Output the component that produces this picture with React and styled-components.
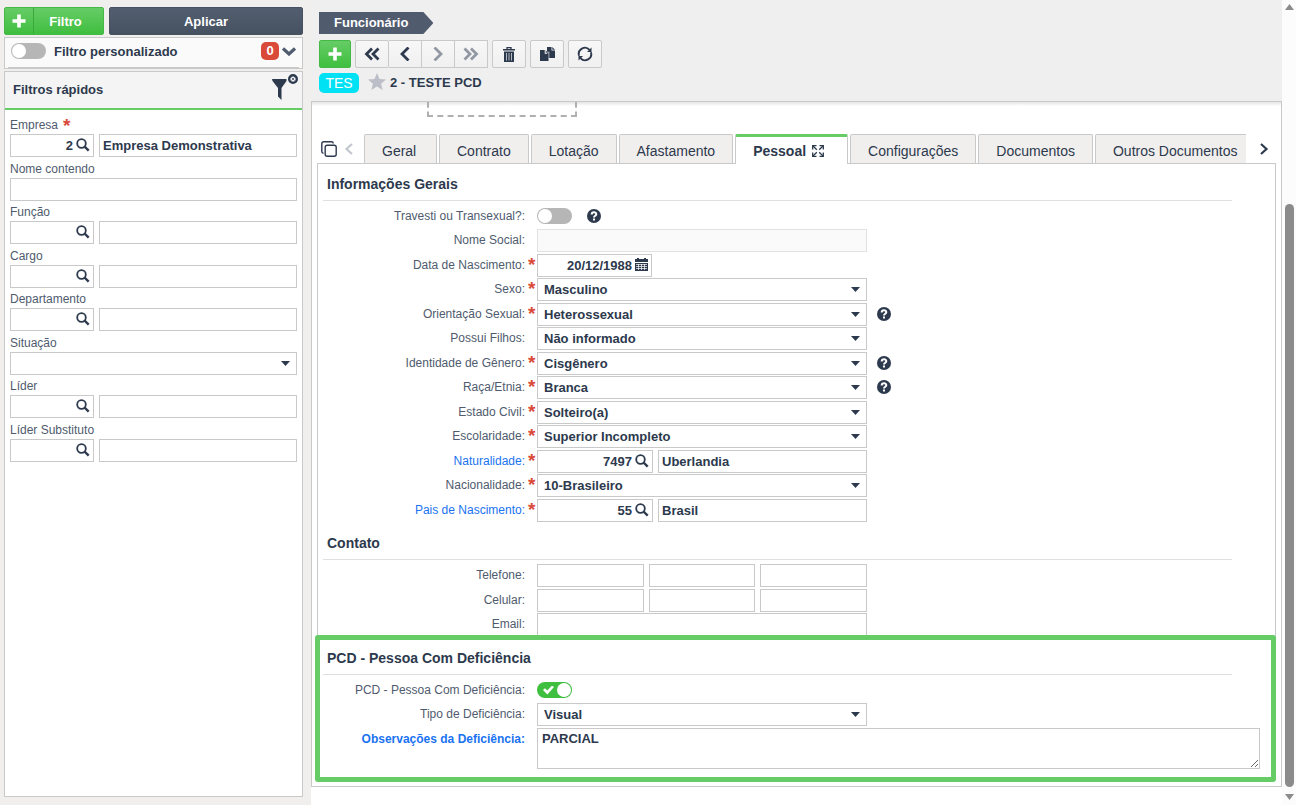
import React, { useId, useState } from 'react';
import styled, { createGlobalStyle, css } from 'styled-components';

const GlobalStyle = createGlobalStyle`
  * { box-sizing: border-box; }

  body {
    margin: 0;
    background: #fff;
    color: #2d394d;
    font-family: "Liberation Sans", Arial, sans-serif;
    font-size: 13px;
  }

  button, input, select, textarea {
    margin: 0;
    color: inherit;
    font: inherit;
  }

  button { cursor: pointer; }
`;

/* ---------- Page ---------- */

const Page = styled.div`
  display: flex;
  min-height: 100vh;
`;

const Sidebar = styled.aside`
  display: flex;
  flex: 0 0 311px;
  flex-direction: column;
  gap: 2px;
  padding: 7px 8px 8px 4px;
  background: #f1efee;
`;

const Main = styled.main`
  display: flex;
  flex: 1;
  flex-direction: column;
  min-width: 0;
`;

const ScrollTrack = styled.div`
  display: flex;
  flex: 0 0 14px;
  flex-direction: column;
  align-items: center;
  padding: 4px 0 5px;
  background: #fcfcfc;
`;

const ScrollSpace = styled.div`
  flex: 1;
`;

const ScrollThumb = styled.div`
  flex: 3;
  width: 9px;
  margin-bottom: 7px;
  border-radius: 5px;
  background: #8b8b8b;
`;

/* ---------- Buttons ---------- */

const green = css`
  border: 1px solid #45b945;
  background: linear-gradient(#66cc66, #3fbf3f);
  color: #fff;
`;

const FilterActions = styled.div`
  display: flex;
  gap: 5px;
`;

const FilterButton = styled.button`
  ${green}
  display: flex;
  flex: 0 0 100px;
  align-items: center;
  height: 28px;
  padding: 0;
  border-radius: 2px;
  font-weight: bold;

  span {
    flex: 1;
    padding-right: 6px;
  }

  svg {
    box-sizing: content-box;
    padding: 6px 7px;
    border-right: 1px solid #3aa83a;
  }
`;

const ApplyButton = styled.button`
  flex: 1;
  height: 28px;
  border: 1px solid #465161;
  border-radius: 2px;
  background: linear-gradient(#535d70, #465260);
  color: #fff;
  font-weight: bold;
`;

const IconButton = styled.button`
  display: flex;
  align-items: center;
  justify-content: center;
  width: 34px;
  height: 28px;
  padding: 0;
  border: 1px solid #c9c9c9;
  border-radius: 2px;
  background: linear-gradient(#f7f7f7, #f0f0f0);

  &:disabled {
    color: #9298a3;
    cursor: default;
  }

  ${({ $primary }) => $primary && css`
    ${green}
    width: 32px;
  `}
`;

const ButtonGroup = styled.div`
  display: flex;

  ${IconButton} + ${IconButton} {
    width: 33px;
    border-left: 0;
    border-radius: 0;
  }
`;

const BareButton = styled.button`
  display: flex;
  align-items: center;
  justify-content: center;
  padding: 0;
  border: 0;
  background: none;

  &:disabled {
    color: #c3c7ce;
  }
`;

/* ---------- Sidebar boxes ---------- */

const CustomFilter = styled.div`
  display: flex;
  align-items: center;
  height: 32px;
  padding: 0 6px 4px;
  border: 1px solid #c9c9c9;
  background: linear-gradient(#c9c9c9, #c9c9c9) 50% 100% / calc(100% - 6px) 1px no-repeat #fafafa;

  label {
    flex: 1;
    margin-left: 8px;
    font-weight: bold;
  }
`;

const Counter = styled.span`
  width: 18px;
  margin-right: 3px;
  border-radius: 5px;
  background: #d94a38;
  color: #fff;
  font-weight: bold;
  line-height: 18px;
  text-align: center;
`;

const QuickFilters = styled.section`
  flex: 1;
  border: 1px solid #c9c9c9;
  background: #fff;
`;

const QuickHeader = styled.header`
  display: flex;
  align-items: flex-start;
  justify-content: space-between;
  height: 38px;
  padding: 0 3px 0 8px;
  border-bottom: 2px solid #66cc66;
  background: #f4f4f4;

  h2 {
    margin: 0;
    font-size: 13px;
    line-height: 35px;
  }
`;

const QuickFields = styled.div`
  display: grid;
  grid-auto-rows: 44px 43px;
  padding: 6px 5px;
`;

/* ---------- Controls ---------- */

const TextInput = styled.input`
  width: 100%;
  min-width: 0;
  height: 23px;
  padding: 0 3px;
  border: 1px solid #c9c9c9;
  background: #fff;
  font-weight: bold;
  outline: none;

  &:disabled {
    border-color: #e2e2e2;
    background: #fafafa;
  }
`;

const IconInput = styled.div`
  display: flex;
  flex: 0 0 ${({ $width }) => $width}px;
  align-items: center;
  width: ${({ $width }) => $width}px;
  height: 23px;
  padding-right: 3px;
  border: 1px solid #c9c9c9;
  background: #fff;

  ${TextInput} {
    height: 21px;
    border: 0;
    text-align: right;
  }

  ${BareButton} {
    padding-bottom: 2px;
  }
`;

const SelectBox = styled.div`
  display: grid;
  align-content: start;
  align-items: center;

  select, svg {
    grid-area: 1 / 1;
  }

  select {
    width: 100%;
    height: 23px;
    padding: 0 24px 0 6px;
    border: 1px solid #c9c9c9;
    border-radius: 0;
    background: #fff;
    appearance: none;
    font-weight: bold;
    outline: none;
  }

  svg {
    justify-self: end;
    margin-right: 7px;
    pointer-events: none;
  }
`;

const TextArea = styled.textarea`
  display: block;
  width: 100%;
  height: 41px;
  padding: 2px 4px;
  border: 1px solid #c9c9c9;
  font-weight: bold;
  outline: none;
`;

const Switch = styled.input.attrs({ type: 'checkbox', role: 'switch' })`
  display: flex;
  flex: none;
  align-items: center;
  width: 35px;
  height: 16px;
  padding: 1px;
  border-radius: 8px;
  background: #b6b6b6;
  appearance: none;
  cursor: pointer;

  &::after {
    width: 14px;
    height: 14px;
    border-radius: 50%;
    background: #fff;
    content: '';
  }

  &:checked {
    justify-content: space-between;
    padding-left: 6px;
    background: #3fbf3f;
  }

  &:checked::before {
    width: 11px;
    height: 9px;
    background: #fff;
    clip-path: polygon(0 50%, 18% 30%, 38% 55%, 82% 0, 100% 18%, 40% 100%);
    content: '';
  }
`;

const Required = styled.span`
  color: #d94a38;
  font-size: 19px;
  font-weight: bold;
  line-height: 22px;
`;

const QuickField = styled.div`
  label {
    display: flex;
    gap: 5px;
    height: 18px;
    color: #4f5b6e;
    font-size: 12px;
    line-height: 18px;
  }

  ${Required} {
    line-height: 20px;
  }
`;

const Split = styled.div`
  display: flex;
  gap: 5px;
`;

/* ---------- Main header ---------- */

const MainHeader = styled.header`
  display: flex;
  flex-direction: column;
  align-items: flex-start;
  padding: 12px 8px 8px;
  background: #efefef;
`;

const Crumb = styled.h1`
  margin: 0 0 6px;
  padding: 0 25px 0 15px;
  background: #505b6e;
  clip-path: polygon(0 0, calc(100% - 10px) 0, 100% 50%, calc(100% - 10px) 100%, 0 100%);
  color: #fff;
  font-size: 13px;
  line-height: 22px;
`;

const Toolbar = styled.div`
  display: flex;
  gap: 4px;
`;

const RecordTitle = styled.div`
  display: flex;
  height: 20px;
  margin-top: 5px;
  font-weight: bold;
  line-height: 19px;

  svg {
    margin-right: 4px;
  }
`;

const Tag = styled.span`
  min-width: 40px;
  margin-right: 9px;
  border-radius: 5px;
  background: #00e1f4;
  color: #fff;
  font-size: 14px;
  font-weight: normal;
  line-height: 20px;
  text-align: center;
`;

/* ---------- Record card and tabs ---------- */

const Card = styled.section`
  padding: 0 5px 4px;
  border: 1px solid #c9c9c9;
  background: linear-gradient(#e4e4e4, #fff) 0 0 / 100% 4px no-repeat #fff;
`;

const PhotoSlot = styled.div`
  width: 150px;
  height: 15px;
  margin-left: 110px;
  border: 2px dashed #b0b0b0;
  border-top: 0;
`;

const TabStrip = styled.div`
  display: flex;
  gap: 7px;
  align-items: center;
  height: 29px;
  margin-top: 17px;
  padding: 0 7px 0 4px;
`;

const TabList = styled.div`
  display: flex;
  flex: 1;
  gap: 2px;
  min-width: 0;
  height: 30px;
  margin: 1px 6px 0 3px;
  overflow: hidden;
  z-index: 1;
`;

const Tab = styled.button`
  display: flex;
  flex: none;
  gap: 6px;
  align-items: center;
  min-width: 73px;
  height: 29px;
  padding: 4px 17px 0;
  border: 1px solid #c9c9c9;
  border-bottom: 0;
  border-radius: 2px 2px 0 0;
  background: #f1efee;
  font-size: 14px;

  &[aria-selected='true'] {
    height: 30px;
    padding: 0 23px 0 17px;
    border-top: 3px solid #66cc66;
    background: #fff;
    font-weight: bold;
  }
`;

const Panel = styled.div`
  padding-left: 5px;
  border: 1px solid #c9c9c9;
  border-bottom: 0;
`;

/* Lies over the end of the panel */
const Highlight = styled.div`
  position: relative;
  margin: -3px 0 0 -2px;
  padding: 0 0 8px 3px;
  border: 5px solid #66cc66;
  border-radius: 3px;
  background: #fff;
`;

const SectionTitle = styled.h2`
  height: ${({ $compact }) => ($compact ? 35 : 37)}px;
  margin: 0 ${({ $compact }) => ($compact ? 39 : 43)}px 4px 0;
  padding: ${({ $compact }) => ($compact ? 2 : 4)}px 0 0 4px;
  border-bottom: 1px solid #e0e0e0;
  font-size: 14px;
  line-height: 32px;
`;

const FormGrid = styled.div`
  display: grid;
  grid-auto-rows: ${({ $rows }) => $rows};
`;

const Row = styled.div`
  display: grid;
  grid-template-columns: 202px 12px minmax(0, ${({ $wide }) => ($wide ? '1fr' : '330px')}) auto;
  align-items: start;
  justify-content: ${({ $wide }) => ($wide ? 'stretch' : 'start')};
  padding-right: ${({ $wide }) => ($wide ? 11 : 0)}px;

  ${Required} {
    padding-left: 3px;
  }
`;

const RowLabel = styled.label`
  color: ${({ $link }) => ($link ? '#1a73f0' : '#4f5b6e')};
  font-size: 12px;
  font-weight: ${({ $bold }) => ($bold ? 'bold' : 'normal')};
  line-height: 23px;
  text-align: right;
`;

const SwitchLine = styled.div`
  display: flex;
  gap: 15px;
  align-items: center;
  height: 22px;
`;

const HelpButton = styled(BareButton)`
  width: 14px;
  height: 14px;
  margin: ${({ $inline }) => ($inline ? '0' : '4px 0 0 10px')};
`;

const Phones = styled.div`
  display: grid;
  grid-template-columns: repeat(3, 1fr);
  gap: 5px;
`;

/* ---------- Icons ---------- */

const Svg = styled.svg`
  flex: none;
`;

const Icon = ({ size = 16, width, height, children, ...rest }) => (
  <Svg
    width={width || size}
    height={height || size}
    viewBox={`0 0 ${width || size} ${height || size}`}
    fill="none"
    stroke="currentColor"
    aria-hidden="true"
    {...rest}
  >
    {children}
  </Svg>
);

const PlusIcon = () => (
  <Icon size={14} strokeWidth="3.600"><path d="M7 0.500v13M0.500 7h13" /></Icon>
);

const SearchIcon = () => (
  <Icon size={14}>
    <circle cx="5.500" cy="5.500" r="4.300" strokeWidth="1.800" />
    <path d="M8.500 8.500l4.200 4.200" strokeWidth="2.400" />
  </Icon>
);

const CaretIcon = () => (
  <Icon width={9} height={5} stroke="none" fill="currentColor"><path d="M0 0h9L4.500 5z" /></Icon>
);

const CalendarIcon = () => (
  <Icon size={13} stroke="none" fill="currentColor">
    <path d="M0 1h2V0h2v1h5V0h2v1h2v3H0zM0 5h13v8H0z" />
    <path d="M1 6.500h11M1 8.500h11M1 10.500h11M3.500 6v6M6.500 6v6M9.500 6v6" stroke="#fff" strokeWidth="0.700" />
  </Icon>
);

const ChevronIcon = ({ double, right }) => (
  <Icon width={16} height={14} strokeWidth="2.800" transform={right ? 'scale(-1 1)' : undefined}>
    {double
      ? <path d="M8 1.500L2.500 7L8 12.500M14.500 1.500L9 7L14.500 12.500" />
      : <path d="M11.500 0.500L5 7l6.500 6.500" />}
  </Icon>
);

const ChevronDownIcon = () => (
  <Icon width={14} height={9} stroke="#4f5b6e" strokeWidth="3.200"><path d="M1 1.500l6 5.500l6-5.500" /></Icon>
);

const TrashIcon = () => (
  <Icon width={12} height={15}>
    <path d="M4 2V0.700h4V2" strokeWidth="1.300" />
    <path d="M0 2h12v1.500H0zM1 4.500h10V15H1z" fill="currentColor" stroke="none" />
    <path d="M3.500 6v7.500M6 6v7.500M8.500 6v7.500" stroke="#b5bac2" strokeWidth="1" />
  </Icon>
);

const CopyIcon = () => (
  <Icon width={15} height={14} stroke="none" fill="currentColor">
    <path d="M7 0h4.500v3.500H15V11H7z" />
    <path d="M12.300 0L15 2.700h-2.700z" />
    <path d="M0 3h4.700v3.700H8.500V14H0z" />
    <path d="M5.500 3l3 2.900h-3z" stroke="#f4f4f4" strokeWidth="0.500" />
    <path d="M8.900 4.500V11.200" stroke="#f4f4f4" strokeWidth="0.600" />
  </Icon>
);

const RefreshIcon = () => (
  <Icon size={16} strokeWidth="1.900">
    <path d="M2.100 9.800A6.100 6.100 0 0 1 12.500 3.900M13.900 6.200A6.100 6.100 0 0 1 3.500 12.100" />
    <path d="M14.500 1.500v4.500h-4.500zM1.500 14.500v-4.500h4.500z" fill="currentColor" stroke="none" />
  </Icon>
);

const StarIcon = () => (
  <Icon width={18} height={17} stroke="none" fill="#bcbfc7">
    <path d="M9 0l2.500 5.900l6.500.6l-4.900 4.200L14.600 17L9 13.600L3.400 17l1.500-6.300L0 6.500l6.500-.6z" />
  </Icon>
);

const FunnelIcon = () => (
  <Icon width={27} height={28}>
    <path d="M0 7h14.500v2L9.500 16v12L6 24.500V16L0.500 9z" fill="currentColor" stroke="none" />
    <circle cx="21" cy="7" r="3.800" strokeWidth="2.400" fill="#f4f4f4" />
    <path d="M19.500 5.500l3 3M22.500 5.500l-3 3" strokeWidth="0.700" />
  </Icon>
);

const HelpIcon = () => (
  <Icon size={14}>
    <circle cx="7" cy="7" r="7" fill="currentColor" stroke="none" />
    <path d="M4.700 5.500C4.700 2.600 9.300 2.700 9.300 5.300C9.300 6.800 7 6.800 7 8.500" stroke="#fff" strokeWidth="2" />
    <path d="M6 9.500h2v2H6z" fill="#fff" stroke="none" />
  </Icon>
);

const PagesIcon = () => (
  <Icon size={16} strokeWidth="1.400">
    <rect x="4.200" y="4.200" width="11" height="11" rx="2" />
    <path d="M2.500 12.200C1.300 12.200 0.800 11.500 0.800 10.500V2.800C0.800 1.500 1.500 0.800 2.800 0.800H10.500C11.600 0.800 12.200 1.300 12.200 2.400" />
  </Icon>
);

const ExpandIcon = () => (
  <Icon size={12} strokeWidth="1.300">
    <path d="M4.500 0.700H0.700v3.800M7.500 0.700h3.800v3.800M4.500 11.300H0.700V7.500M7.500 11.300h3.800V7.500" />
    <path d="M1 1l3.800 3.800M11 1L7.200 4.800M1 11l3.800-3.800M11 11L7.200 7.200" />
  </Icon>
);

const TabArrow = ({ right }) => (
  <Icon width={10} height={12} strokeWidth="2.200" transform={right ? 'scale(-1 1)' : undefined}>
    <path d="M8 1L2.500 6L8 11" />
  </Icon>
);

/* ---------- Fields ---------- */

const SelectField = ({ id, value }) => (
  <SelectBox>
    <select id={id} defaultValue={value}>
      <option>{value}</option>
    </select>
    <CaretIcon />
  </SelectBox>
);

const LookupField = ({ id, code, name, width, label }) => (
  <Split>
    <IconInput $width={width}>
      <TextInput id={id} defaultValue={code} />
      <BareButton type="button" aria-label={`Pesquisar ${label}`}><SearchIcon /></BareButton>
    </IconInput>
    <TextInput defaultValue={name} aria-label={`${label} descrição`} />
  </Split>
);

const Help = ({ inline }) => (
  <HelpButton type="button" aria-label="Ajuda" $inline={inline}><HelpIcon /></HelpButton>
);

const Control = ({ id, field }) => {
  const { type, label, value, code, help, checked } = field;

  switch (type) {
    case 'switch':
      return (
        <SwitchLine>
          <Switch id={id} defaultChecked={checked} />
          {help && <Help inline />}
        </SwitchLine>
      );
    case 'date':
      return (
        <IconInput $width={115}>
          <TextInput id={id} defaultValue={value} />
          <BareButton type="button" aria-label="Abrir calendário"><CalendarIcon /></BareButton>
        </IconInput>
      );
    case 'lookup':
      return <LookupField id={id} code={code} name={value} width={116} label={label} />;
    case 'phone':
      return (
        <Phones>
          <TextInput id={id} />
          <TextInput aria-label={`${label} número`} />
          <TextInput aria-label={`${label} ramal`} />
        </Phones>
      );
    case 'textarea':
      return <TextArea id={id} defaultValue={value} />;
    case 'text':
      return <TextInput id={id} disabled={field.disabled} />;
    default:
      return <SelectField id={id} value={value} />;
  }
};

const FormRow = ({ field }) => {
  const id = useId();

  return (
    <Row $wide={field.type === 'textarea'}>
      <RowLabel htmlFor={id} $link={field.link} $bold={field.bold}>{field.label}:</RowLabel>
      {field.required ? <Required>*</Required> : <span />}
      <Control id={id} field={field} />
      {field.help && field.type !== 'switch' && <Help />}
    </Row>
  );
};

const QuickRow = ({ field }) => {
  const id = useId();

  return (
    <QuickField>
      <label htmlFor={id}>
        {field.label}
        {field.required && <Required>*</Required>}
      </label>
      {field.type === 'text' && <TextInput id={id} />}
      {field.type === 'select' && <SelectField id={id} value="" />}
      {!field.type && (
        <LookupField id={id} code={field.code} name={field.value} width={84} label={field.label} />
      )}
    </QuickField>
  );
};

/* ---------- Data ---------- */

const quickFields = [
  { label: 'Empresa', code: '2', value: 'Empresa Demonstrativa', required: true },
  { label: 'Nome contendo', type: 'text' },
  { label: 'Função' },
  { label: 'Cargo' },
  { label: 'Departamento' },
  { label: 'Situação', type: 'select' },
  { label: 'Líder' },
  { label: 'Líder Substituto' },
];

const tabs = [
  'Geral', 'Contrato', 'Lotação', 'Afastamento', 'Pessoal', 'Configurações', 'Documentos', 'Outros Documentos',
];

const generalFields = [
  { label: 'Travesti ou Transexual?', type: 'switch', help: true },
  { label: 'Nome Social', type: 'text', disabled: true },
  { label: 'Data de Nascimento', type: 'date', value: '20/12/1988', required: true },
  { label: 'Sexo', value: 'Masculino', required: true },
  { label: 'Orientação Sexual', value: 'Heterossexual', required: true, help: true },
  { label: 'Possui Filhos', value: 'Não informado' },
  { label: 'Identidade de Gênero', value: 'Cisgênero', required: true, help: true },
  { label: 'Raça/Etnia', value: 'Branca', required: true, help: true },
  { label: 'Estado Civil', value: 'Solteiro(a)', required: true },
  { label: 'Escolaridade', value: 'Superior Incompleto', required: true },
  { label: 'Naturalidade', type: 'lookup', code: '7497', value: 'Uberlandia', required: true, link: true },
  { label: 'Nacionalidade', value: '10-Brasileiro', required: true },
  { label: 'Pais de Nascimento', type: 'lookup', code: '55', value: 'Brasil', required: true, link: true },
];

const contactFields = [
  { label: 'Telefone', type: 'phone' },
  { label: 'Celular', type: 'phone' },
  { label: 'Email', type: 'text' },
];

const pcdFields = [
  { label: 'PCD - Pessoa Com Deficiência', type: 'switch', checked: true },
  { label: 'Tipo de Deficiência', value: 'Visual' },
  { label: 'Observações da Deficiência', type: 'textarea', value: 'PARCIAL', link: true, bold: true },
];

const FormSection = ({ title, fields, rows, compact }) => (
  <section>
    <SectionTitle $compact={compact}>{title}</SectionTitle>
    <FormGrid $rows={rows}>
      {fields.map((field) => <FormRow key={field.label} field={field} />)}
    </FormGrid>
  </section>
);

const App = () => {
  const [activeTab, setActiveTab] = useState('Pessoal');

  return (
    <Page>
      <GlobalStyle />
      <Sidebar>
        <FilterActions>
          <FilterButton type="button"><PlusIcon /><span>Filtro</span></FilterButton>
          <ApplyButton type="button">Aplicar</ApplyButton>
        </FilterActions>
        <CustomFilter>
          <Switch id="custom-filter" />
          <label htmlFor="custom-filter">Filtro personalizado</label>
          <Counter>0</Counter>
          <BareButton type="button" aria-label="Expandir"><ChevronDownIcon /></BareButton>
        </CustomFilter>
        <QuickFilters>
          <QuickHeader>
            <h2>Filtros rápidos</h2>
            <BareButton type="button" aria-label="Limpar filtros"><FunnelIcon /></BareButton>
          </QuickHeader>
          <QuickFields>
            {quickFields.map((field) => <QuickRow key={field.label} field={field} />)}
          </QuickFields>
        </QuickFilters>
      </Sidebar>

      <Main>
        <MainHeader>
          <Crumb>Funcionário</Crumb>
          <Toolbar>
            <IconButton type="button" $primary aria-label="Novo"><PlusIcon /></IconButton>
            <ButtonGroup>
              <IconButton type="button" aria-label="Primeiro"><ChevronIcon double /></IconButton>
              <IconButton type="button" aria-label="Anterior"><ChevronIcon /></IconButton>
              <IconButton type="button" aria-label="Próximo" disabled><ChevronIcon right /></IconButton>
              <IconButton type="button" aria-label="Último" disabled><ChevronIcon double right /></IconButton>
            </ButtonGroup>
            <IconButton type="button" aria-label="Excluir"><TrashIcon /></IconButton>
            <IconButton type="button" aria-label="Duplicar"><CopyIcon /></IconButton>
            <IconButton type="button" aria-label="Atualizar"><RefreshIcon /></IconButton>
          </Toolbar>
          <RecordTitle>
            <Tag>TES</Tag>
            <StarIcon />
            2 - TESTE PCD
          </RecordTitle>
        </MainHeader>

        <Card>
          <PhotoSlot />
          <TabStrip>
            <BareButton type="button" aria-label="Abas"><PagesIcon /></BareButton>
            <BareButton type="button" aria-label="Abas anteriores" disabled><TabArrow /></BareButton>
            <TabList role="tablist">
              {tabs.map((tab) => (
                <Tab
                  key={tab}
                  type="button"
                  role="tab"
                  aria-selected={tab === activeTab}
                  onClick={() => setActiveTab(tab)}
                >
                  {tab}
                  {tab === activeTab && <ExpandIcon />}
                </Tab>
              ))}
            </TabList>
            <BareButton type="button" aria-label="Próximas abas"><TabArrow right /></BareButton>
          </TabStrip>
          <Panel>
            <FormSection title="Informações Gerais" fields={generalFields} rows="24px 25px" />
            <FormSection title="Contato" fields={contactFields} rows="25px 24px" />
          </Panel>
          <Highlight>
            <FormSection
              title="PCD - Pessoa Com Deficiência"
              fields={pcdFields}
              rows="minmax(24px, auto) minmax(25px, auto)"
              compact
            />
          </Highlight>
        </Card>
      </Main>

      <ScrollTrack aria-hidden="true">
        <Icon width={9} height={6} stroke="none" fill="#8b8b8b"><path d="M0 6L4.500 0L9 6z" /></Icon>
        <ScrollSpace />
        <ScrollThumb />
        <Icon width={9} height={6} stroke="none" fill="#8b8b8b"><path d="M0 0h9L4.500 6z" /></Icon>
      </ScrollTrack>
    </Page>
  );
};

export default App;
